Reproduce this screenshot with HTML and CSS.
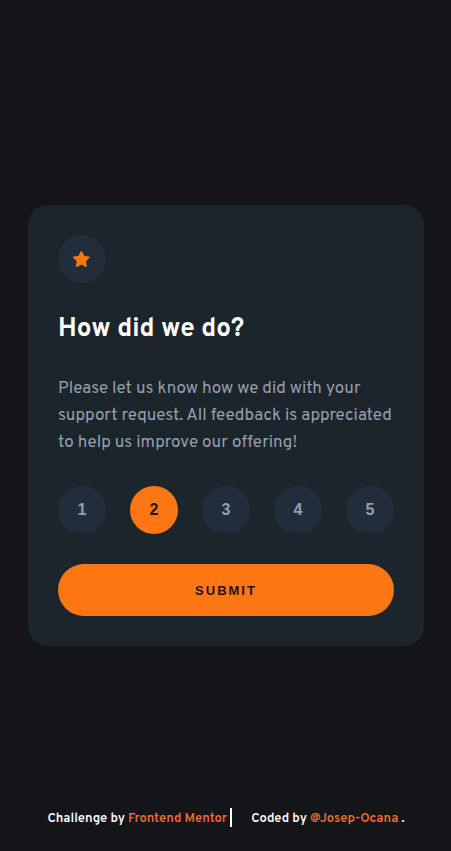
FILE: index.html
```html
<!DOCTYPE html>
<html lang="en">
<head>
  <meta charset="utf-8">
  <meta name="viewport" content="width=device-width, initial-scale=1">
  <title>Interactive rating component</title>
  <link rel="stylesheet" href="styles.css">
</head>
<body>
  <main class="card">
    <div class="star">
      <svg width="17" height="16" viewBox="0 0 17 16" aria-hidden="true">
        <path d="m9.067.43 1.99 4.031c.112.228.33.386.58.422l4.45.647a.772.772 0 0 1 .427 1.316l-3.22 3.138a.773.773 0 0 0-.222.683l.76 4.431a.772.772 0 0 1-1.12.813l-3.98-2.092a.773.773 0 0 0-.718 0l-3.98 2.092a.772.772 0 0 1-1.119-.813l.76-4.431a.77.77 0 0 0-.222-.683L.233 6.846A.772.772 0 0 1 .661 5.53l4.449-.647a.772.772 0 0 0 .58-.422L7.68.43a.774.774 0 0 1 1.387 0Z"/>
      </svg>
    </div>
    <h1 class="title">How did we do?</h1>
    <p class="text">Please let us know how we did with your support request. All feedback is appreciated to help us improve our offering!</p>
    <form class="form">
      <div class="ratings" role="group" aria-label="Rating">
        <button class="rating" type="button" aria-pressed="false">1</button>
        <button class="rating" type="button" aria-pressed="true">2</button>
        <button class="rating" type="button" aria-pressed="false">3</button>
        <button class="rating" type="button" aria-pressed="false">4</button>
        <button class="rating" type="button" aria-pressed="false">5</button>
      </div>
      <button class="submit" type="submit">SUBMIT</button>
    </form>
  </main>
  <footer class="footer">
    <p class="credit credit-divided">Challenge by <a class="link" href="#">Frontend Mentor</a></p>
    <p class="credit">Coded by <a class="link" href="#">@Josep-Ocana</a> .</p>
  </footer>
</body>
</html>
```
FILE: styles.css
```css
* {
  box-sizing: border-box;
  margin: 0;
}

body {
  display: grid;
  grid-template-rows: 1fr auto 1fr;
  min-height: 100vh;
  padding: 0 27px 0 28px;
  background: #131518;
  color: #fff;
  font-family: Overpass, Roboto, sans-serif;
}

.card {
  grid-row: 2;
  justify-self: center;
  width: 100%;
  max-width: 412px;
  padding: 30px;
  border-radius: 20px;
  background: #1c242c;
}

.star {
  display: flex;
  align-items: center;
  width: 48px;
  height: 48px;
  padding-left: 15px;
  border-radius: 50%;
  background: #222d3c;
}

.star path {
  fill: #fc7614;
}

.title {
  margin: 31px 0 30px;
  font-size: 26px;
  font-weight: 700;
  line-height: 32px;
}

.text {
  color: #969fad;
  font-size: 17px;
  line-height: 27px;
}

.form {
  display: grid;
  gap: 30px;
  margin-top: 29px;
}

.ratings {
  display: flex;
  justify-content: space-between;
}

.rating {
  width: 48px;
  height: 48px;
  padding: 0;
  border: 0;
  border-radius: 50%;
  background: #222d3c;
  color: #969fad;
  font: 700 16px "Liberation Sans", Arial, sans-serif;
}

.rating[aria-pressed="true"] {
  background: #fc7614;
  color: #2a1013;
}

.submit {
  height: 52px;
  border: 0;
  border-radius: 26px;
  background: #fc7614;
  color: #2a1013;
  font: 700 13px "Liberation Sans", Arial, sans-serif;
  letter-spacing: 2px;
}

.footer {
  display: flex;
  grid-row: 3;
  align-self: end;
  justify-content: center;
  gap: 19px;
  padding-bottom: 24px;
}

.credit {
  padding-top: 3px;
  font-size: 13px;
  font-weight: 600;
  line-height: 16px;
}

.credit-divided {
  padding-right: 3px;
  border-right: 2px solid #fff;
}

.link {
  color: #ee6c36;
  text-decoration: none;
}
```
